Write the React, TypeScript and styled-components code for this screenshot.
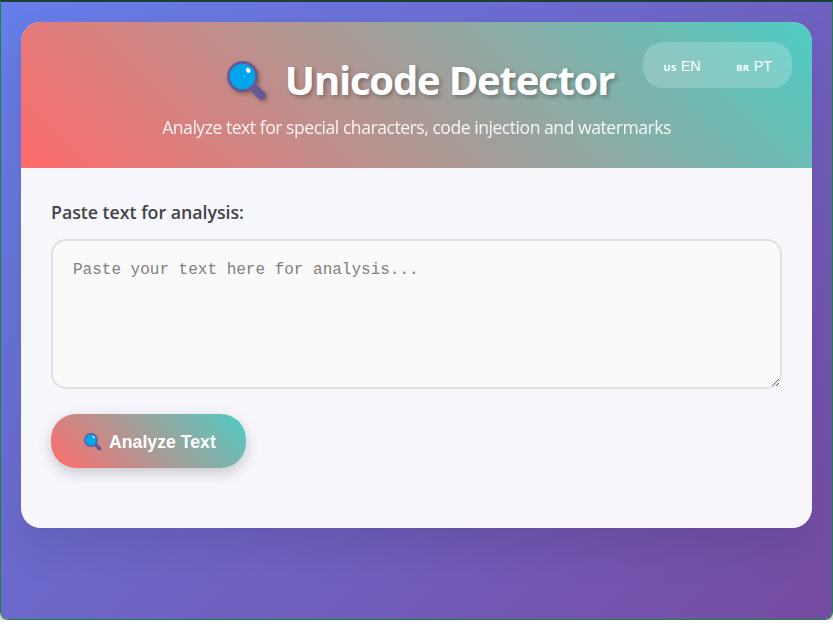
import React from "react";
import styled, { createGlobalStyle } from "styled-components";

const GlobalStyle = createGlobalStyle`
  * { box-sizing: border-box; margin: 0; padding: 0; }
  html, body { background: #fff; overflow: hidden; }
  body { font-family: "Segoe UI", "Open Sans", "Noto Sans", sans-serif; }
`;

const Frame = styled.div`
  background: #d5d5d5;
`;

const Page = styled.main`
  height: 620px;
  padding: 20px;
  border: 1px solid #158740;
  border-top: 2px solid #1c3d31;
  border-radius: 0 0 8px 8px;
  background: linear-gradient(135deg, #667eea 0%, #764ba2 100%) padding-box;
`;

const Card = styled.section`
  height: 506px;
  border-radius: 20px;
  overflow: hidden;
  background: rgba(255, 255, 255, 0.95);
  box-shadow: 0 20px 40px rgba(0, 0, 0, 0.1);
`;

const Header = styled.header`
  position: relative;
  height: 146px;
  padding-top: 30px;
  display: flex;
  flex-direction: column;
  align-items: center;
  color: #fff;
  background: linear-gradient(45deg, #ff6b6b, #4ecdc4);
`;

const Title = styled.h1`
  display: flex;
  align-items: center;
  height: 56px;
  padding-left: 8px;
  font-size: 40px;
  line-height: 56px;
  font-weight: 700;
  letter-spacing: -1.2px;
  white-space: nowrap;
  text-shadow: 2px 2px 4px rgba(0, 0, 0, 0.3);
`;

const Subtitle = styled.p`
  height: 24px;
  margin-top: 7px;
  font-size: 17.6px;
  line-height: 24px;
  letter-spacing: -0.48px;
  white-space: nowrap;
  opacity: 0.9;
`;

const Languages = styled.nav`
  position: absolute;
  top: 20px;
  right: 20px;
  width: 149px;
  height: 46px;
  display: flex;
  gap: 5px;
  padding: 5px;
  border-radius: 20px;
  background: rgba(255, 255, 255, 0.2);
`;

const Language = styled.button`
  flex: 1;
  display: flex;
  align-items: baseline;
  justify-content: center;
  gap: 4px;
  padding: 10px 0 0 1px;
  border: 0;
  background: none;
  color: #fff;
  font: 14.4px/18px "Liberation Sans", Arial, sans-serif;
`;

const Region = styled.span`
  font: 700 9.6px/14px "Segoe UI", "Open Sans", sans-serif;
  letter-spacing: 0.5px;
`;

const Content = styled.div`
  padding: 30px;
`;

const Label = styled.label`
  display: block;
  height: 41px;
  font-size: 17.8px;
  line-height: 29px;
  font-weight: 600;
  letter-spacing: -0.03px;
  color: #444;
`;

const TextInput = styled.textarea`
  display: block;
  width: 100%;
  height: 150px;
  padding: 20px;
  border: 2px solid #e0e0e0;
  border-radius: 15px;
  background: #fafafa;
  font: 16px/18px "Courier New", "Liberation Mono", monospace;
  resize: vertical;
  outline: none;
  &::placeholder { color: #808080; }
`;

const AnalyzeButton = styled.button`
  width: 195px;
  height: 54px;
  margin-top: 25px;
  display: flex;
  align-items: center;
  gap: 7px;
  padding: 1px 0 0 33px;
  border: 0;
  border-radius: 25px;
  background: linear-gradient(45deg, #ff6b6b, #4ecdc4);
  box-shadow: 0 5px 15px rgba(0, 0, 0, 0.2);
  color: #fff;
  font: 700 17.6px/20px "Liberation Sans", Arial, sans-serif;
  letter-spacing: 0.05px;
  white-space: nowrap;
`;

const Lens = styled.svg<{ $size: number; $gap?: number; $shadow?: boolean }>`
  flex: none;
  width: ${(p) => p.$size}px;
  height: ${(p) => p.$size}px;
  margin-top: ${(p) => (p.$shadow ? 2 : 0)}px;
  margin-right: ${(p) => p.$gap ?? 0}px;
  overflow: visible;
  filter: ${(p) => (p.$shadow ? "drop-shadow(2px 2px 2px rgba(0,0,0,.3))" : "none")};
`;

function Magnifier(props: { size: number; gap?: number; shadow?: boolean }) {
  return (
    <Lens $size={props.size} $gap={props.gap} $shadow={props.shadow} viewBox="0 0 40 40" aria-hidden="true">
      <path d="M28.5 28.5 L34.5 34.5" stroke="#635994" strokeWidth="8.5" strokeLinecap="round" />
      <circle cx="15.5" cy="15.5" r="14.1" fill="#00a6ed" stroke="#635994" strokeWidth="2.8" />
      <ellipse cx="21.2" cy="9.3" rx="2.1" ry="2.7" fill="#fff" transform="rotate(-28 21.2 9.3)" />
    </Lens>
  );
}

export default function App() {
  return (
    <Frame>
      <GlobalStyle />
      <Page>
        <Card>
          <Header>
            <Languages>
              <Language><Region>US</Region>EN</Language>
              <Language><Region>BR</Region>PT</Language>
            </Languages>
            <Title><Magnifier size={40} gap={18} shadow />Unicode Detector</Title>
            <Subtitle>Analyze text for special characters, code injection and watermarks</Subtitle>
          </Header>
          <Content>
            <Label htmlFor="source">Paste text for analysis:</Label>
            <TextInput id="source" placeholder="Paste your text here for analysis..." />
            <AnalyzeButton><Magnifier size={18} />Analyze Text</AnalyzeButton>
          </Content>
        </Card>
      </Page>
    </Frame>
  );
}
